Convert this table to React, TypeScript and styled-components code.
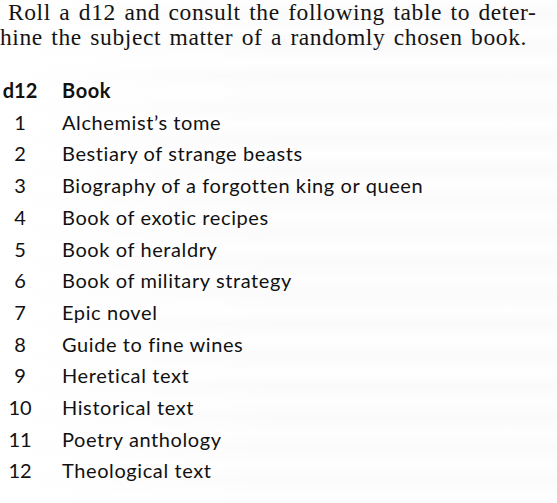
import React from "react";
import styled, { createGlobalStyle } from "styled-components";

const Global = createGlobalStyle`
  html, body { margin: 0; padding: 0; background: #ffffff; }
  body { width: 557px; height: 503px; overflow: hidden; }
`;

const Page = styled.div`
  width: 557px;
  height: 503px;
  overflow: hidden;
  background:
    linear-gradient(90deg, rgba(255,255,255,1) 0px, rgba(255,255,255,0) 300px),
    repeating-linear-gradient(180deg, rgba(0,0,0,0) 0px, rgba(0,0,0,0.014) 14px, rgba(0,0,0,0) 31px),
    #fefefe;
`;

const Paragraph = styled.div`
  font-family: "Liberation Serif", "Times New Roman", serif;
  font-size: 23.5px;
  line-height: 25px;
  letter-spacing: 0.6px;
  word-spacing: 2px;
  color: #141414;
  white-space: nowrap;
`;

const Line = styled.span<{ $indent?: number }>`
  display: block;
  padding-left: ${(p) => p.$indent ?? 0}px;
`;

const Table = styled.div`
  margin-top: 25px;
  display: grid;
  grid-template-columns: 40px auto;
  column-gap: 22px;
  font-family: Lato, "Open Sans", sans-serif;
  font-size: 20px;
  line-height: 31.7px;
  letter-spacing: 0.6px;
  color: #111;
`;

const Num = styled.div<{ $head?: boolean }>`
  text-align: center;
  letter-spacing: 0;
  font-weight: ${(p) => (p.$head ? 700 : 400)};
`;

const Cell = styled.div<{ $head?: boolean }>`
  font-weight: ${(p) => (p.$head ? 700 : 400)};
  white-space: nowrap;
`;

const rows = [
  "Alchemist’s tome",
  "Bestiary of strange beasts",
  "Biography of a forgotten king or queen",
  "Book of exotic recipes",
  "Book of heraldry",
  "Book of military strategy",
  "Epic novel",
  "Guide to fine wines",
  "Heretical text",
  "Historical text",
  "Poetry anthology",
  "Theological text",
];

export default function App() {
  return (
    <>
      <Global />
      <Page>
        <Paragraph>
          <Line $indent={8}>Roll a d12 and consult the following table to deter-</Line>
          <Line>hine the subject matter of a randomly chosen book.</Line>
        </Paragraph>
        <Table>
          <Num $head>d12</Num>
          <Cell $head>Book</Cell>
          {rows.map((r, i) => (
            <React.Fragment key={i}>
              <Num>{i + 1}</Num>
              <Cell>{r}</Cell>
            </React.Fragment>
          ))}
        </Table>
      </Page>
    </>
  );
}
